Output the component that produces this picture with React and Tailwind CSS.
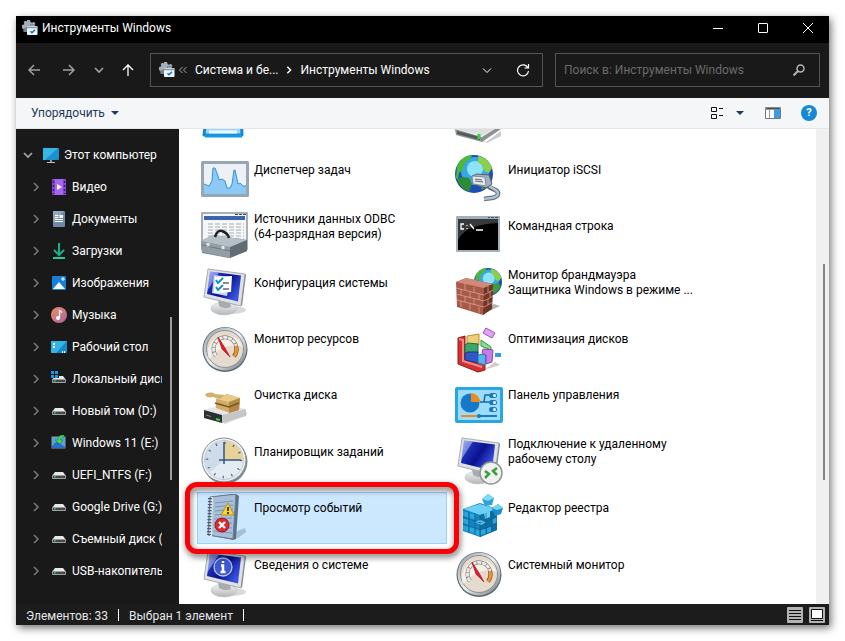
import React from 'react';

const ToolsIcon = () => (
  <svg viewBox="0 0 16 16" className="h-4 w-4 shrink-0">
    <path
      d="M5 0h3l.5 2 1.500.7L12 1.800l1.500 2.200-1.300 1.700.8 1.300v5H4.500L2 12 1.800 9.500 0 8V5l2-.5.3-1.200L1.500 2 3.500.800 5 1.500z"
      fill="#a3b0b9"
    />
    <path d="M1.500 8.500V12h4V7z" fill="#76838c" />
    <path d="M8.500 6V4.500h4V6" fill="none" stroke="#76838c" />
    <rect x="5" y="6" width="10.500" height="9" rx="0.800" fill="#f1f4f6" />
    <path d="M5 8.300V6.600h10.500v1.700z" fill="#8f9ba3" />
    <path d="M8.500 11.200l1.500 1.500 3-3" fill="none" stroke="#0a74d0" strokeWidth="1.600" />
  </svg>
);

const Chevron = ({ down, className }) => (
  <svg viewBox="0 0 12 12" className={className} fill="none" stroke="currentColor" strokeWidth="1.700">
    <path d={down ? 'M2 4l4 4 4-4' : 'M4 2l4 4-4 4'} />
  </svg>
);

const PcIcon = () => (
  <svg viewBox="0 0 16 16" className="h-4 w-4">
    <rect y="1" width="16" height="12" rx="1" fill="#1c8fce" />
    <path d="M0 2a1 1 0 011-1h14L2 13H0z" fill="#35b8e6" />
    <path d="M7 13h2v2h-2z" fill="#8e999f" />
    <path d="M4 15.500h8" stroke="#b9c3c8" />
  </svg>
);

const VideoIcon = () => (
  <svg viewBox="0 0 16 16" className="h-4 w-4">
    <rect x="1" width="14" height="16" rx="1" fill="#8b47da" />
    <path d="M4 0h8v16H4z" fill="#a566ea" />
    <path d="M2.500 2v13M13.500 2v13" stroke="#3e1673" strokeWidth="1.500" strokeDasharray="2 2" />
    <path d="M6 5l5 3-5 3z" fill="#fff" />
  </svg>
);

const DocIcon = () => (
  <svg viewBox="0 0 16 16" className="h-4 w-4">
    <rect x="2" width="12" height="16" rx="1" fill="#7089a8" />
    <path d="M2 0h11L2 12z" fill="#91a6bf" />
    <path d="M4 4.500h3.500M4 6.500h3.500M4 8.500h8M4 10.500h8" stroke="#fff" />
    <rect x="8.500" y="4" width="3.500" height="3" fill="#fff" />
  </svg>
);

const DownloadIcon = () => (
  <svg viewBox="0 0 16 16" className="h-4 w-4" fill="none" strokeWidth="2">
    <path d="M8 0v12M3 7l5 5 5-5" stroke="#1eae8a" />
    <path d="M2 15h12" stroke="#26c997" />
  </svg>
);

const ImageIcon = () => (
  <svg viewBox="0 0 16 16" className="h-4 w-4">
    <rect x="1" y="1" width="14" height="14" rx="1" fill="#1680d8" />
    <path d="M2 14l6-7 6 7z" fill="#f3f9ff" />
    <path d="M12 2v4M10 4h4" stroke="#fff" />
  </svg>
);

const MusicIcon = () => (
  <svg viewBox="0 0 16 16" className="h-4 w-4">
    <defs>
      <linearGradient id="music" x2="1" y2="1">
        <stop stopColor="#f09060" />
        <stop offset="1" stopColor="#aa5fa5" />
      </linearGradient>
    </defs>
    <circle cx="8" cy="8" r="8" fill="url(#music)" />
    <circle cx="7" cy="11" r="2" fill="#fff" />
    <path d="M8.500 11V3.500L11 5.500" fill="none" stroke="#fff" strokeWidth="1.300" />
  </svg>
);

const DesktopIcon = () => (
  <svg viewBox="0 0 16 16" className="h-4 w-4">
    <rect y="2" width="16" height="12" rx="1" fill="#1688cc" />
    <path d="M0 3a1 1 0 011-1h15L5 14H1a1 1 0 01-1-1z" fill="#33b4e6" />
    <path d="M2 5h2M2 8h2M11 13h1M13 13h1" stroke="#fff" strokeWidth="2" />
  </svg>
);

const DriveIcon = ({ windows }) => (
  <svg viewBox="0 0 16 16" className="h-4 w-4">
    <path d="M4 5h8l3 4H1z" fill="#e5e7e9" />
    <rect x="1" y="8" width="14" height="4" rx="0.800" fill="#9b9fa3" />
    <rect x="2" y="9" width="12" height="2" fill="#43484c" />
    <path d="M3 10h2" stroke="#43d460" />
    {windows && (
      <>
        <path d="M0 0h8v7H0z" fill="#191919" />
        <path d="M0 0h3v3H0zM4 0h3v3H4zM0 4h3v3H0zM4 4h3v3H4z" fill="#1c97ea" />
      </>
    )}
  </svg>
);

const InstallIcon = () => (
  <svg viewBox="0 0 16 16" className="h-4 w-4">
    <rect x="1" y="2" width="13" height="11" fill="#5aa0e2" stroke="#8a99a8" />
    <path d="M1 11l5-5 8 6v1H1z" fill="#2b6fc4" />
    <path d="M13 0c-5 0-6 2-6 5H4l4.500 4L12 5H9.500c0-2 1-3 3.500-3z" fill="#3ee04e" stroke="#117c24" strokeWidth="0.500" />
  </svg>
);

const Monitor = ({ children }) => (
  <>
    <defs>
      <linearGradient id="screen" x1="0" y1="0" x2="1" y2="0.600">
        <stop stopColor="#8b9df0" />
        <stop offset="0.300" stopColor="#1c2db4" />
        <stop offset="0.600" stopColor="#0a128f" />
        <stop offset="1" stopColor="#3a55e0" />
      </linearGradient>
      <linearGradient id="stand" x2="0" y2="1">
        <stop stopColor="#f3f4f5" />
        <stop offset="1" stopColor="#b3b6b9" />
      </linearGradient>
    </defs>
    <ellipse cx="30" cy="42" rx="15" ry="4" fill="#000" opacity="0.150" />
    <ellipse cx="23" cy="40.500" rx="13" ry="6.500" fill="url(#stand)" stroke="#b9bcbf" strokeWidth="0.500" />
    <path d="M17 32l12 2 1 5c-4 2-9 1-12-1z" fill="#a9acaf" />
    <path d="M7 1l37 5-4 32L3 29z" fill="#dfe1e3" stroke="#a9adb1" />
    <path d="M44 6l1 1-4 31-1-1z" fill="#868b90" />
    <path d="M9 3.500l31 4-3 26L6 26z" fill="url(#screen)" />
    <path d="M9 3.500l9 1L6 23z" fill="#c4cefb" opacity="0.500" />
    {children}
  </>
);

const Gauge = () => (
  <>
    <defs>
      <linearGradient id="rim" x2="1" y2="1">
        <stop stopColor="#8d979f" />
        <stop offset="0.500" stopColor="#eef1f3" />
        <stop offset="1" stopColor="#6b757d" />
      </linearGradient>
    </defs>
    <circle cx="24" cy="24.500" r="22.500" fill="#5f686f" />
    <circle cx="24" cy="24" r="21.500" fill="url(#rim)" />
    <circle cx="24" cy="24" r="18.500" fill="#e4dacd" stroke="#8d9296" />
    <path d="M8 34A18 18 0 0142 22C34 18 20 20 8 34z" fill="#f4efe8" />
    <path d="M15 31A11.500 11.500 0 1133 31" fill="none" stroke="#85827e" strokeWidth="4" />
    <path d="M15 31A11.500 11.500 0 1133 31" fill="none" stroke="#eeeae4" strokeWidth="2.800" strokeDasharray="4 0.800" />
    <path d="M35 21A11.500 11.500 0 0133 31.500" fill="none" stroke="#8d5414" strokeWidth="4" />
    <path d="M35 21A11.500 11.500 0 0133 31.500" fill="none" stroke="#e9963a" strokeWidth="2.800" />
    <path d="M17 12l7 11 5 9-8-8z" fill="#d3202b" stroke="#c01824" strokeWidth="0.800" />
  </>
);

const Globe = ({ cx, cy, r }) => (
  <g transform={`translate(${cx} ${cy}) scale(${r / 19})`}>
    <circle r="19" fill="#1c4fb4" />
    <circle cx="1" cy="-3" r="14" fill="#39a6e6" />
    <circle cx="1" cy="-5" r="8" fill="#8de4fa" />
    <path d="M-17-8c3-7 9-11 15-11l-2 5-5 2-1 6-5 5-1 7-2-2z" fill="#4cb83c" />
    <path d="M-12 3l7 1 3 6-3 8c-7-3-11-8-12-13z" fill="#2e8c34" />
    <path d="M4-18c7 1 12 6 14 12l-3 5-5-2-2-6-4-3z" fill="#8ad04a" />
    <path d="M6 3l8-2 3 5c-2 5-5 8-9 10l-3-7z" fill="#3d9c3b" />
  </g>
);

const art = {
  components: (
    <>
      <path d="M6 10h34l1 26H3z" fill="#9ad8fa" stroke="#1687cf" strokeWidth="3" strokeLinejoin="round" />
      <path d="M8 33h28" stroke="#eefaff" strokeWidth="3" />
      <path d="M4 37h37" stroke="#1699e2" strokeWidth="3" />
    </>
  ),
  drive: (
    <>
      <path d="M6 36l25 7 15-11v5L32 44z" fill="#c9cbcd" />
      <path d="M0 30l27 8 19-12v4L27 43 1 36z" fill="#8d9193" />
      <path d="M0 30l16-9 30 5-19 11z" fill="#dddfe0" />
      <path d="M2 32l23 6v3L2 35z" fill="#55595b" />
      <path d="M24 35v5" stroke="#34d43c" strokeWidth="3" />
    </>
  ),
  taskmgr: (
    <>
      <rect y="6" width="48" height="36" rx="1.500" fill="#98a6b2" />
      <rect x="3" y="9" width="42" height="30" fill="#edf1f5" />
      <path
        d="M3 29l5 2 3-5 1-13 2 0 3 8 1 4 3-1 3 2 2 7h3l2-4 2-14 1-0 3 14 2-1 3 3 3 0v8H3z"
        fill="#8ccaf5"
      />
      <path
        d="M3 29l5 2 3-5 1-13 2 0 3 8 1 4 3-1 3 2 2 7h3l2-4 2-14 1-0 3 14 2-1 3 3 3 0"
        fill="none"
        stroke="#3094dc"
      />
    </>
  ),
  odbc: (
    <>
      <path d="M1 1h45v36H1z" fill="#f5f6f8" stroke="#8d979f" strokeWidth="1.500" />
      <path d="M3 4h41v4H3z" fill="#3b64b0" />
      <path d="M34 2.500h3m1 0h3m1 0h3" stroke="#3b4a5a" />
      <path d="M7 12h36M7 15h36M7 18h36M7 21h36M7 24h36M7 27h36" stroke="#a9afb5" strokeDasharray="5 2" />
      <path d="M0 29l12-6 34 5v11L28 46 1 41z" fill="#7b868e" />
      <path d="M0 29l12-6 34 5-17 8z" fill="#b4bfc6" />
      <path d="M0 29l29 6v11L1 40z" fill="#929da5" />
      <path d="M29 35l17-7v11l-17 7z" fill="#616c75" />
      <path d="M14 25c2-6 4-7 7-6s6 3 7 7" fill="none" stroke="#1e2225" strokeWidth="2.500" />
      <path d="M7 31v4M22 34v4" stroke="#e3e7ea" strokeWidth="3" />
      <path d="M1 33l28 6 17-7" fill="none" stroke="#5f6a72" strokeWidth="0.700" />
    </>
  ),
  config: (
    <Monitor>
      <path d="M13 7l16 2-3 19-15-3z" fill="#cbd6f3" />
      <path d="M14 9l17-1-1 16-17 1z" fill="#fff" />
      <path d="M15 12l2 3 5-5M15 19l2 3 5-5" fill="none" stroke="#148fc4" strokeWidth="2" />
      <path d="M22 15h6M22 21h6" stroke="#606870" strokeWidth="1.500" />
    </Monitor>
  ),
  gauge: <Gauge />,
  cleanup: (
    <>
      <path d="M21 41l25-10v3L24 43z" fill="#000" opacity="0.150" />
      <path d="M3 29l20-6 22 5-24 9z" fill="#e4e6e7" />
      <path d="M21 34l24-6v7l-24 7z" fill="#c4c6c8" />
      <path d="M3 29l18 5v8L3 37z" fill="#2c3033" />
      <path d="M15 38l4 1" stroke="#2fd945" strokeWidth="2" />
      <path d="M5 34l5 1.500" stroke="#7d8488" />
      <path d="M15 18l11-5 13 4-1 12-9 3-14-5z" fill="#d3ad63" />
      <path d="M15 18l11-5 13 4-11 4z" fill="#e6cc86" />
      <path d="M28 21l11-4-1 12-10 3z" fill="#b58843" />
      <path d="M14 22l14 4 10-4" fill="none" stroke="#765529" strokeWidth="1.500" />
      <path d="M4 14c2-3 7-3 10-1l10 1-5 4-7-2c-4 1-7 0-8-2z" fill="#d4b070" />
    </>
  ),
  clock: (
    <>
      <circle cx="24" cy="24.500" r="22.500" fill="#83898d" />
      <circle cx="23" cy="23" r="22" fill="#eef1f3" stroke="#888e93" />
      <circle cx="23" cy="23" r="19.500" fill="#e3ebf3" stroke="#c3ccd3" />
      <path d="M4 23a19 19 0 0119-19v19L9 35a19 19 0 01-5-12z" fill="#cddbea" />
      <path d="M23 23V4a19 19 0 0119 19z" fill="#e8d29a" />
      <circle cx="23" cy="23" r="17" fill="none" stroke="#516678" strokeWidth="2.500" strokeDasharray="1.200 7.700" />
      <path d="M23 5v22M18 23h22" stroke="#305a7c" strokeWidth="1.500" />
    </>
  ),
  events: (
    <>
      <path d="M34 38l10-4 1 4-8 6-6 2z" fill="#49687f" opacity="0.300" />
      <path d="M9 3l26-3 3 2-3 43-3 1-25-5z" fill="#59738b" />
      <path d="M9 3l26-3-3 45L7 41z" fill="#a9bfd8" stroke="#64798d" />
      <path
        d="M14 9l18-2M14 13l18-2M14 17l18-2M14 21l18-2M13 25l18-1M13 29l18 0M13 33l18 1M13 37l18 2"
        stroke="#7895bb"
      />
      <path d="M11 3L10 42" stroke="#dde8f2" strokeWidth="2" />
      <path d="M9 4L8 41" stroke="#4c5b68" strokeWidth="4" strokeDasharray="1.200 1.800" />
      <path d="M27 9l6 12H20z" fill="#fbd72c" stroke="#b8920a" />
      <path d="M27 13v4M27 18v2" stroke="#222" strokeWidth="1.700" />
      <circle cx="21" cy="31" r="7" fill="#d82b30" stroke="#9f171c" />
      <path d="M18 28l6 6M24 28l-6 6" stroke="#fff" strokeWidth="2.300" />
    </>
  ),
  sysinfo: (
    <Monitor>
      <circle cx="22" cy="17" r="9" fill="#3e58cf" stroke="#b8c6f4" strokeWidth="1.300" />
      <path d="M22 11v2M20 15.500h2v6M19.500 22h5" fill="none" stroke="#fff" strokeWidth="2.500" />
    </Monitor>
  ),
  iscsi: (
    <>
      <Globe cx={19} cy={19} r={19} />
      <path d="M31 29c4 6 13 5 12 10-1 4-7 4-14 5" fill="none" stroke="#56697a" strokeWidth="4.500" />
      <path d="M31 28c4 6 13 6 12 11-1 4-7 4-14 5" fill="none" stroke="#b2c3d0" strokeWidth="2.500" />
      <path d="M17 21l5-2 12 1 3 9-6 4-13-4z" fill="#a4b1ba" stroke="#53626e" />
      <path d="M17 21l13 1 1 9-13-2z" fill="#e2e8ec" stroke="#7f8d98" />
      <path d="M20 24l7 1M20 26l8 1" stroke="#5b6a75" />
    </>
  ),
  cmd: (
    <>
      <rect x="1" y="4" width="44" height="36" rx="1" fill="#a4b0b9" />
      <rect x="3" y="7" width="40" height="31" fill="#000" />
      <path d="M3 7h40v4c-20 1-34 5-40 17z" fill="#35393b" />
      <path d="M33 5.500h2m1 0h3m1 0h3" stroke="#325e8a" />
      <path d="M9 12H6v5h3M12 13v1M12 16v1M15 12l4 5M21 18h7" fill="none" stroke="#fff" strokeWidth="1.300" />
    </>
  ),
  firewall: (
    <>
      <Globe cx={33} cy={14} r={14} />
      <path d="M28 46l17-8-6-2z" fill="#000" opacity="0.300" />
      <path d="M1 14l10-4 27 6-1 24-9 7-26-8z" fill="#a75a48" />
      <path d="M1 14l10-4 27 6-9 4z" fill="#cf8b77" />
      <path d="M29 20l9-4-1 25-9 6z" fill="#713326" />
      <path
        d="M1 20l28 7 9-5M1 26l28 7 9-5M2 32l27 7 9-5M10 16v6M19 19v6M6 21v6M15 24v6M24 26v6M10 28v6M19 31v6M6 33v6M15 36v6M24 39v6M33 18v6M33 31v6M35 23v6"
        fill="none"
        stroke="#dfad9b"
        strokeWidth="0.700"
      />
    </>
  ),
  defrag: (
    <>
      <path d="M29 45l16-5-5-3z" fill="#000" opacity="0.200" />
      <path d="M3 13l7-2v22l20 6v6l-7 2-20-8z" fill="#d33131" stroke="#8f1818" />
      <path d="M4 14l4 1v21l19 6" fill="none" stroke="#f08c82" strokeWidth="2" />
      <path d="M12 11l12-2v11H12z" fill="#edcf75" stroke="#b98d33" />
      <path d="M10 20l3-2 10 1v9H10z" fill="#3ba66a" stroke="#1c6b3e" />
      <path d="M10 29l2-2h11v11l-13-3z" fill="#3158cb" stroke="#1c3481" />
      <path d="M23 30l6-1 2 2-1 9-7-2z" fill="#56b5eb" stroke="#2779b0" />
      <path d="M26 15l10 7v3l-10-4z" fill="#8cdc8e" stroke="#2d9748" />
      <path d="M28 24l10 1-1 12-6 2v-9l-4-2z" fill="#c67ce9" stroke="#8845ad" />
      <path d="M31 3l9 5-3 5-9-5z" fill="#e2a3f5" stroke="#a44dcc" />
      <path d="M40 30h6" stroke="#299fe8" strokeWidth="4" />
    </>
  ),
  control: (
    <>
      <rect y="6" width="48" height="36" rx="2" fill="#27a8e4" />
      <rect x="3" y="9" width="42" height="30" fill="#9cdcfa" />
      <circle cx="15" cy="22" r="9.500" fill="#1578c8" />
      <path d="M16 21v-9a9 9 0 019 9z" fill="#ee8b18" />
      <path d="M25 21h4l1-7h4M27 21h7" fill="none" stroke="#1769a8" strokeWidth="1.500" />
      <rect x="34" y="12" width="8" height="5" rx="2.500" fill="#1578c8" />
      <rect x="34" y="19" width="8" height="5" rx="2.500" fill="#1578c8" />
      <rect x="34" y="26" width="8" height="5" rx="2.500" fill="#1578c8" />
      <circle cx="39.500" cy="14.500" r="1.500" fill="#fff" />
      <circle cx="39.500" cy="21.500" r="1.500" fill="#fff" />
      <circle cx="39.500" cy="28.500" r="1.500" fill="#fff" />
      <path d="M6 35h17" stroke="#ee8b18" strokeWidth="2" />
      <path d="M24 35h18" stroke="#1578c8" strokeWidth="2" />
      <circle cx="24" cy="35" r="2" fill="#1578c8" />
    </>
  ),
  rdp: (
    <Monitor>
      <circle cx="36" cy="36" r="11" fill="#f0f0f0" stroke="#8f9497" strokeWidth="1.500" />
      <path d="M30 34l4 3-4 4M42 31l-4 3 4 4" fill="none" stroke="#3b9d3e" strokeWidth="2.500" />
    </Monitor>
  ),
  registry: (
    <>
      <path d="M8 15l17-6 17 6v21l-17 7-17-6z" fill="#1684bf" />
      <path d="M8 15l17-5 17 5-17 6z" fill="#6ccff3" />
      <path d="M25 21l17-6v21l-17 7z" fill="#0f6fa5" />
      <path d="M8 17l5 1.500v5L8 22zM14.500 19l5 1.500v5l-5-1.500zM8 24l5 1.500v5L8 29zM8 31l5 1.500v5L8 36zM14.500 33l5 1.500v5l-5-1.500z" fill="#2aa7dc" />
      <path d="M20.500 35l4 1v6l-4-1.500zM26 36l5-1.500v5L26 41.500zM32 34l4-1.500v5L32 39zM37.500 25l4-1.500v5l-4 1.500z" fill="#2aa7dc" />
      <path d="M20 28l5-2 6 2-5 3zM29 19l6-2v6l-5 2z" fill="#69d0f5" />
      <path
        d="M8 23l17 6 17-6M8 30l17 6 17-6M14 17v22M20 19v22M25 21v22M31 19v21M37 17v21"
        fill="none"
        stroke="#0b5c8c"
        strokeWidth="0.600"
      />
      <path d="M27 5l6-5 6 4-2 7-7 1z" fill="#2ba2d9" />
      <path d="M27 5l6-5 6 4-6 3z" fill="#80dcf8" />
      <path d="M37 14l6-4 5 4-2 6-6 2z" fill="#1d8fc8" />
      <path d="M37 14l6-4 5 4-6 2z" fill="#72d5f6" />
    </>
  ),
};

const tools = [
  { icon: 'components', name: '' },
  { icon: 'drive', name: '' },
  { icon: 'taskmgr', name: 'Диспетчер задач' },
  { icon: 'iscsi', name: 'Инициатор iSCSI' },
  { icon: 'odbc', name: 'Источники данных ODBC\n(64-разрядная версия)' },
  { icon: 'cmd', name: 'Командная строка' },
  { icon: 'config', name: 'Конфигурация системы' },
  { icon: 'firewall', name: 'Монитор брандмауэра\nЗащитника Windows в режиме ...' },
  { icon: 'gauge', name: 'Монитор ресурсов' },
  { icon: 'defrag', name: 'Оптимизация дисков' },
  { icon: 'cleanup', name: 'Очистка диска' },
  { icon: 'control', name: 'Панель управления' },
  { icon: 'clock', name: 'Планировщик заданий' },
  { icon: 'rdp', name: 'Подключение к удаленному\nрабочему столу' },
  { icon: 'events', name: 'Просмотр событий', selected: true },
  { icon: 'registry', name: 'Редактор реестра' },
  { icon: 'sysinfo', name: 'Сведения о системе' },
  { icon: 'gauge', name: 'Системный монитор' },
];

const places = [
  { name: 'Видео', icon: <VideoIcon /> },
  { name: 'Документы', icon: <DocIcon /> },
  { name: 'Загрузки', icon: <DownloadIcon /> },
  { name: 'Изображения', icon: <ImageIcon /> },
  { name: 'Музыка', icon: <MusicIcon /> },
  { name: 'Рабочий стол', icon: <DesktopIcon /> },
  { name: 'Локальный диск', icon: <DriveIcon windows /> },
  { name: 'Новый том (D:)', icon: <DriveIcon /> },
  { name: 'Windows 11 (E:)', icon: <InstallIcon /> },
  { name: 'UEFI_NTFS (F:)', icon: <DriveIcon /> },
  { name: 'Google Drive (G:)', icon: <DriveIcon /> },
  { name: 'Съемный диск (H:)', icon: <DriveIcon /> },
  { name: 'USB-накопитель', icon: <DriveIcon /> },
];

const TitleBar = () => (
  <header className="flex h-[27px] shrink-0 items-start bg-black text-white">
    <div className="flex h-6 grow items-center gap-1 pl-1.5">
      <ToolsIcon />
      <h1>Инструменты Windows</h1>
    </div>
    <button aria-label="Свернуть" className="flex h-6 w-[45px] items-center justify-center">
      <svg viewBox="0 0 10 10" className="h-2.5 w-2.5" stroke="currentColor">
        <path d="M0 5.500h10" />
      </svg>
    </button>
    <button aria-label="Развернуть" className="flex h-6 w-[45px] items-center justify-center">
      <svg viewBox="0 0 10 10" className="h-2.5 w-2.5" fill="none" stroke="currentColor">
        <rect x="0.500" y="0.500" width="9" height="9" rx="0.500" />
      </svg>
    </button>
    <button aria-label="Закрыть" className="flex h-6 w-11 items-center justify-center pl-0.5">
      <svg viewBox="0 0 10 10" className="h-2.5 w-2.5" stroke="currentColor">
        <path d="M0 0l10 10M10 0L0 10" />
      </svg>
    </button>
  </header>
);

const NavBar = () => (
  <nav className="flex h-[55px] shrink-0 items-start bg-[#191919] pt-2.5 pr-[9px] pl-3 text-white">
    <div className="flex h-[34px] w-[122px] shrink-0 items-center">
      <button aria-label="Назад" className="mr-[23px] text-[#a0a0a0]">
        <svg viewBox="0 0 12 12" className="h-3 w-3" fill="none" stroke="currentColor" strokeWidth="1.500">
          <path d="M12 6H1M6 1L1 6l5 5" />
        </svg>
      </button>
      <button aria-label="Вперед" className="mr-[18px] text-[#a0a0a0]">
        <svg viewBox="0 0 12 12" className="h-3 w-3" fill="none" stroke="currentColor" strokeWidth="1.500">
          <path d="M0 6h11M6 1l5 5-5 5" />
        </svg>
      </button>
      <button aria-label="Последние расположения" className="mr-[17px] text-[#a0a0a0]">
        <Chevron down className="h-3 w-3" />
      </button>
      <button aria-label="Вверх">
        <svg viewBox="0 0 12 12" className="h-3 w-3" fill="none" stroke="currentColor" strokeWidth="1.300">
          <path d="M6 12V1M1 6l5-5 5 5" />
        </svg>
      </button>
    </div>
    <div className="flex h-[34px] grow items-center border border-[#535353] pl-2">
      <ToolsIcon />
      <span className="w-5 pl-1 text-[#a0a0a0]">
        <svg viewBox="0 0 8 8" className="h-2 w-2" fill="none" stroke="currentColor">
          <path d="M3.500 1l-3 3 3 3M7.500 1l-3 3 3 3" />
        </svg>
      </span>
      <button className="whitespace-nowrap">Система и бе...</button>
      <Chevron className="mx-1.5 h-2.5 w-2.5 shrink-0" />
      <button className="whitespace-nowrap">Инструменты Windows</button>
      <button aria-label="Предыдущие расположения" className="ml-auto">
        <svg viewBox="0 0 10 10" className="h-2.5 w-2.5" fill="none" stroke="currentColor">
          <path d="M1 3.500l4 4 4-4" />
        </svg>
      </button>
      <button aria-label="Обновить" className="mr-3 ml-6">
        <svg viewBox="0 0 14 14" className="h-3.5 w-3.5" fill="none" stroke="currentColor" strokeWidth="1.200">
          <path d="M12 5A5.500 5.500 0 1012.500 8M12.500 1v4h-4" />
        </svg>
      </button>
    </div>
    <label className="ml-3 flex h-[34px] w-[265px] shrink-0 items-center border border-[#535353] px-2">
      <input
        type="search"
        aria-label="Поиск"
        placeholder="Поиск в: Инструменты Windows"
        className="min-w-0 grow bg-transparent outline-none placeholder:text-[#6b6b6b]"
      />
      <svg viewBox="0 0 12 12" className="mr-1.5 h-3 w-3 text-[#b5b5b5]" fill="none" stroke="currentColor" strokeWidth="1.500">
        <circle cx="7.500" cy="4.500" r="3.500" />
        <path d="M5 7l-4.500 4.500" strokeWidth="2" />
      </svg>
    </label>
  </nav>
);

const Toolbar = () => (
  <div className="flex h-[31px] shrink-0 items-center border-b border-[#e4e6e8] bg-[#f5f6f8] pr-3 pl-[15px] text-[#1e395b]">
    <button className="flex items-center gap-1.5">
      Упорядочить
      <svg viewBox="0 0 8 4" className="h-1 w-2" fill="currentColor">
        <path d="M0 0h8L4 4z" />
      </svg>
    </button>
    <div className="ml-auto flex items-center">
      <button aria-label="Вид" className="flex items-center gap-3">
        <svg viewBox="0 0 13 12" className="h-3 w-[13px]" fill="none" stroke="#111">
          <path d="M.5.500h5v4h-5zM.5 7.500h5v4h-5zM8 1.500h4M8 8.500h4" />
        </svg>
        <svg viewBox="0 0 8 4" className="h-1 w-2" fill="currentColor">
          <path d="M0 0h8L4 4z" />
        </svg>
      </button>
      <button aria-label="Область просмотра" className="mr-5 ml-[21px]">
        <svg viewBox="0 0 16 12" className="h-3 w-4">
          <path d="M.5.500h15v11H.5z" fill="#fff" stroke="#777" />
          <path d="M1 1h14v1.500H1zM4.500 2v9" stroke="#9a9a9a" />
          <path d="M9 2h6v9H9z" fill="#3f9be6" />
        </svg>
      </button>
      <button
        aria-label="Справка"
        className="flex h-4 w-4 items-center justify-center rounded-full bg-[#1787d8] text-[11px] font-bold text-white"
      >
        ?
      </button>
    </div>
  </div>
);

const Sidebar = () => (
  <aside className="flex w-[163px] shrink-0 overflow-hidden bg-[#191919] text-white">
    <ul className="w-[146px] shrink-0 overflow-hidden pt-2.5">
      <li>
        <button className="flex h-8 items-center whitespace-nowrap">
          <Chevron down className="mr-[9px] ml-1.5 h-3 w-3 text-[#a8a8a8]" />
          <PcIcon />
          <span className="pl-[5px]">Этот компьютер</span>
        </button>
      </li>
      {places.map((place) => (
        <li key={place.name}>
          <button className="flex h-8 items-center whitespace-nowrap">
            <Chevron className="mr-[9px] ml-3.5 h-3 w-3 shrink-0 text-[#747474]" />
            <span className="shrink-0">{place.icon}</span>
            <span className="pl-[5px]">{place.name}</span>
          </button>
        </li>
      ))}
    </ul>
    {/* scroll thumb */}
    <div className="mt-[188px] ml-2 h-[163px] w-0.5 bg-[#9d9d9d]" />
  </aside>
);

const Tile = ({ tool }) => (
  <li className="relative h-[52px]">
    <button
      className={`flex h-full w-full items-center gap-[5px] border pl-[3px] text-left ${
        tool.selected ? 'border-[#99d1ff] bg-[#cce8ff]' : 'border-transparent'
      }`}
    >
      <svg viewBox="0 0 48 48" className="h-12 w-12 shrink-0">
        {art[tool.icon]}
      </svg>
      <span className="grow pb-[18px] leading-[15px] whitespace-pre-line">{tool.name}</span>
    </button>
    {tool.selected && (
      <div className="pointer-events-none absolute -inset-x-3 -inset-y-2.5 z-10 rounded-xl border-[5px] border-[#fb0007] drop-shadow-[1px_3px_3px_rgba(0,0,0,0.6)]" />
    )}
  </li>
);

const StatusBar = () => (
  <footer className="flex h-[21px] shrink-0 items-center bg-[#1c1c1c] pr-1 pl-2.5 text-[#e6e6e6]">
    <span className="pt-0.5">Элементов: 33</span>
    <span className="mx-2.5 h-3 w-px bg-white" />
    <span className="pt-0.5">Выбран 1 элемент</span>
    <span className="mx-2.5 h-3 w-px bg-white" />
    <button aria-label="Таблица" className="ml-auto">
      <svg viewBox="0 0 16 16" className="h-4 w-4">
        <rect width="16" height="16" rx="1" fill="#b3b3b3" />
        <path d="M2 3.500h12M2 6.500h12M2 9.500h12M2 12.500h12" stroke="#111" />
      </svg>
    </button>
    <button aria-label="Крупные значки" className="ml-1.5">
      <svg viewBox="0 0 16 16" className="h-4 w-4">
        <rect width="16" height="16" rx="1" fill="#b3b3b3" />
        <path d="M2.500 2.500h11v9h-11z" fill="#fff" stroke="#111" />
        <path d="M2 13.500h12" stroke="#111" />
      </svg>
    </button>
  </footer>
);

const App = () => {
  return (
    <div className="h-screen bg-white p-4 font-['Roboto','Open_Sans',sans-serif] text-xs">
      <div className="flex h-full flex-col shadow-[2px_3px_8px_rgba(0,0,0,0.55)]">
        <TitleBar />
        <NavBar />
        <Toolbar />
        <div className="flex min-h-0 grow">
          <Sidebar />
          <main className="flex grow flex-col overflow-hidden bg-white pl-[18px] text-black">
            <ul className="-mt-8 mb-1 grid grow grid-cols-[repeat(auto-fill,250px)] content-between gap-x-1">
              {tools.map((tool, index) => (
                <Tile key={index} tool={tool} />
              ))}
            </ul>
          </main>
          <div className="w-[13px] shrink-0 bg-[#f0f0f0] pl-[7px]">
            <div className="mt-[135px] h-[216px] w-0.5 bg-[#868686]" />
          </div>
        </div>
        <StatusBar />
      </div>
    </div>
  );
};

export default App;
